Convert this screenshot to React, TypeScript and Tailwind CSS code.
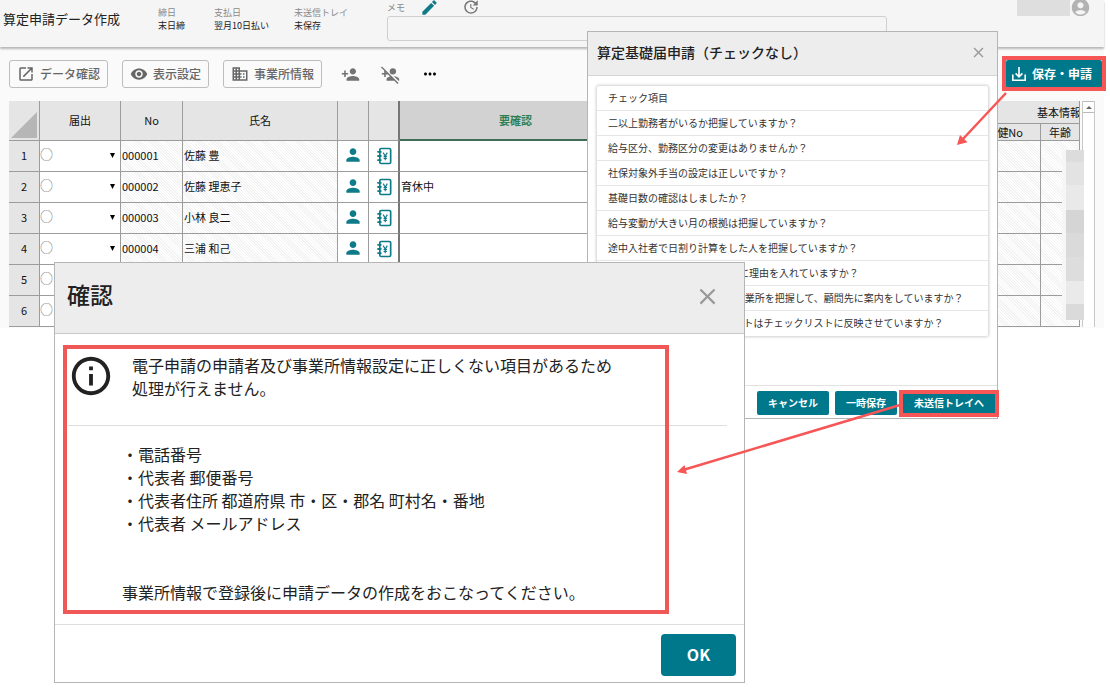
import type { ReactNode } from "react";
import {
  MdAccountCircle,
  MdBusiness,
  MdClose,
  MdEdit,
  MdMoreHoriz,
  MdOpenInNew,
  MdOutlineInfo,
  MdPerson,
  MdPersonAdd,
  MdPersonAddDisabled,
  MdUpdate,
  MdVisibility,
} from "react-icons/md";

const employees = [
  { no: "000001", name: "佐藤 豊", note: "" },
  { no: "000002", name: "佐藤 理恵子", note: "育休中" },
  { no: "000003", name: "小林 良二", note: "" },
  { no: "000004", name: "三浦 和己", note: "" },
  { no: "000005", name: "", note: "" },
  { no: "000006", name: "", note: "" },
];

const checkItems = [
  "二以上勤務者がいるか把握していますか？",
  "給与区分、勤務区分の変更はありませんか？",
  "社保対象外手当の設定は正しいですか？",
  "基礎日数の確認はしましたか？",
  "給与変動が大きい月の根拠は把握していますか？",
  "途中入社者で日割り計算をした人を把握していますか？",
  "支払基礎日数17日未満の備考に理由を入れていますか？",
  "100人以上の社会保険加入の事業所を把握して、顧問先に案内をしていますか？",
  "2か月目以降の給与変更ポイントはチェックリストに反映させていますか？",
];

const invalidFields = [
  "電話番号",
  "代表者 郵便番号",
  "代表者住所 都道府県 市・区・郡名 町村名・番地",
  "代表者 メールアドレス",
];

const headCell = "border-r border-b border-[#9c9c9c] bg-[#e5e5e5] p-0 font-normal";
const tallHeadCell = "border-r border-b border-[#9c9c9c] bg-[#e5e5e5] p-0 pb-[2px] font-normal";
const cell = "border-r border-b border-[#9c9c9c] bg-white p-0 pb-[2px]";
const hatched =
  "border-r border-b border-[#9c9c9c] bg-[repeating-linear-gradient(45deg,#ffffff_0px,#ffffff_1px,#f3f3f3_1px,#f3f3f3_2px)] p-0 pb-[2px]";

const PayrollBook = () => (
  <svg viewBox="0 0 24 24" className="h-5 w-5" fill="none" stroke="#0f7a88" strokeWidth="2">
    <rect x="7" y="3" width="13" height="18" rx="1.5" />
    <path d="M4 7h5M4 12h5M4 17h5" strokeWidth="2.2" />
    <path d="M11 8l2.500 4L16 8M13.500 12v5M11.500 12.500h4M11.500 14.800h4" strokeWidth="1.4" />
  </svg>
);

const SaveTray = () => (
  <svg viewBox="0 0 16 16" className="h-4 w-4" fill="none" stroke="currentColor" strokeWidth="1.6">
    <path d="M1.8 8.5v5.7h12.4V8.5" />
    <path d="M8 1v9.5M4.6 7.4L8 10.8l3.4-3.4" />
  </svg>
);

const Summary = ({ label, value, width }: { label: string; value: string; width: string }) => (
  <dl className={`${width} shrink-0 pt-[6px] text-[9px] leading-[13px]`}>
    <dt className="text-[#8a8a8a]">{label}</dt>
    <dd className="text-[#222]">{value}</dd>
  </dl>
);

const ToolButton = ({ icon, children }: { icon: ReactNode; children: string }) => (
  <button className="flex h-7 items-center gap-[5px] rounded-[3px] border border-[#bdbdbd] px-[7px] pb-px text-[12px] font-medium whitespace-nowrap text-[#666]">
    {icon}
    {children}
  </button>
);

const PrimaryButton = ({ children }: { children: string }) => (
  <button className="h-6 rounded-[2px] bg-[#00788c] px-[11px] pb-px text-[10px] font-bold text-white">
    {children}
  </button>
);

const Header = () => (
  <header className="relative flex h-[47px] bg-[#f5f5f5] shadow-[0_2px_2px_#b8b8b8]">
    <h1 className="w-[158px] shrink-0 pt-[9px] pl-[3px] text-[13px] leading-5 text-[#222]">
      算定申請データ作成
    </h1>
    <Summary label="締日" value="末日締" width="w-[56px]" />
    <Summary label="支払日" value="翌月10日払い" width="w-[80px]" />
    <Summary label="未送信トレイ" value="未保存" width="w-[93px]" />
    <div className="max-w-[500px] flex-1">
      <div className="flex h-4 items-center text-[9px] text-[#8a8a8a]">
        <label htmlFor="memo" className="w-[33px]">
          メモ
        </label>
        <button aria-label="メモを編集" className="mb-[2px] w-[42px] text-[#0f7a88]">
          <MdEdit size={19} />
        </button>
        <button aria-label="更新履歴" className="mb-[2px] text-[#777]">
          <MdUpdate size={18} />
        </button>
      </div>
      <input
        id="memo"
        readOnly
        className="block h-[25px] w-full rounded-[3px] border border-[#cfcfcf] bg-transparent px-2 text-[11px]"
      />
    </div>
    <div className="ml-auto flex h-4 items-center overflow-hidden pr-[13px]">
      <span className="h-4 w-[53px] bg-[#dedede]" />
      <MdAccountCircle size={21} className="mb-[2px] shrink-0 text-[#b3b3b3]" />
    </div>
  </header>
);

const Toolbar = () => (
  <div className="flex h-[54px] items-center pr-[2px] pl-[9px]">
    <div className="flex gap-[14px]">
      <ToolButton icon={<MdOpenInNew size={18} />}>データ確認</ToolButton>
      <ToolButton icon={<MdVisibility size={18} />}>表示設定</ToolButton>
      <ToolButton icon={<MdBusiness size={18} />}>事業所情報</ToolButton>
    </div>
    <div className="ml-2 flex text-[#737373]">
      <button aria-label="従業員を追加" className="flex w-10 justify-center">
        <MdPersonAdd size={19} />
      </button>
      <button aria-label="従業員を除外" className="flex w-10 justify-center">
        <MdPersonAddDisabled size={19} />
      </button>
      <button aria-label="その他" className="flex w-10 justify-center text-black">
        <MdMoreHoriz size={18} />
      </button>
    </div>
    <button className="ml-auto flex h-7 items-center gap-[5px] rounded-[2px] bg-[#00788c] pr-[10px] pb-px pl-[5px] text-[12px] font-bold text-white">
      <SaveTray />
      保存・申請
    </button>
  </div>
);

const EmployeeTable = () => (
  <table className="w-full table-fixed border-separate border-spacing-0 text-[11px] leading-4 text-[#111]">
    <colgroup>
      <col className="w-[31px]" />
      <col className="w-[81px]" />
      <col className="w-[62px]" />
      <col className="w-[155px]" />
      <col className="w-[31px]" />
      <col className="w-[31px]" />
      <col className="w-[232px]" />
      <col />
      <col className="w-[80px]" />
      <col className="w-[39px]" />
    </colgroup>
    <thead>
      <tr className="h-[23px]">
        <th rowSpan={2} className={headCell} aria-label="すべて選択">
          <svg viewBox="0 0 30 39" className="block h-[39px] w-[30px]">
            <path d="M28 11v26H2z" fill="#b6b6b6" />
          </svg>
        </th>
        <th rowSpan={2} className={tallHeadCell}>届出</th>
        <th rowSpan={2} className={tallHeadCell}>No</th>
        <th rowSpan={2} className={tallHeadCell}>氏名</th>
        <th rowSpan={2} className={tallHeadCell} aria-label="従業員" />
        <th
          rowSpan={2}
          aria-label="賃金台帳"
          className="border-r-2 border-b border-r-[#777] border-b-[#9c9c9c] bg-[#e5e5e5] p-0"
        />
        <th
          rowSpan={2}
          className="border-r border-b-2 border-r-[#9c9c9c] border-b-[#3f6b57] bg-[#d2d2d2] p-0 font-bold text-[#2f7f53]"
        >
          要確認
        </th>
        <th rowSpan={2} className={headCell} />
        <th colSpan={2} className={headCell}>
          <div className="overflow-hidden pl-[76px] text-left whitespace-nowrap">基本情報</div>
        </th>
      </tr>
      <tr className="h-[17px]">
        <th className={headCell}>
          <div className="pr-[17px] text-right">健No</div>
        </th>
        <th className={headCell}>年齢</th>
      </tr>
    </thead>
    <tbody>
      {employees.map((e, i) => (
        <tr key={e.no} className="h-[31px]">
          <th className={tallHeadCell}>{i + 1}</th>
          <td className={cell}>
            <div className="relative">
              <select
                aria-label={`${e.no} 届出`}
                className="block h-5 w-full appearance-none bg-transparent pb-[2px] text-[13px] leading-[18px] text-[#777]"
              >
                <option>○</option>
              </select>
              <svg
                viewBox="0 0 6 6"
                className="pointer-events-none absolute top-[8px] right-[5px] h-[5px] w-[5px]"
              >
                <path d="M0 0h6L3 6z" />
              </svg>
            </div>
          </td>
          <td className={`${hatched} pl-px`}>{e.no}</td>
          <td className={`${hatched} pl-px`}>{e.name}</td>
          <td className={cell}>
            <button aria-label="従業員情報" className="mx-auto block text-[#0f7a88]">
              <MdPerson size={20} />
            </button>
          </td>
          <td className="border-r-2 border-b border-r-[#777] border-b-[#9c9c9c] bg-white p-0 pb-px">
            <button aria-label="賃金台帳" className="mx-auto block">
              <PayrollBook />
            </button>
          </td>
          <td className={`${cell} pl-px`}>{e.note}</td>
          <td className={cell} />
          <td className={hatched} />
          <td className={hatched} />
        </tr>
      ))}
    </tbody>
  </table>
);

// Blurred-out personal values on the right edge of the table
const MaskedValues = () => (
  <div className="absolute top-[49px] right-[20px] w-[22px] border-l-4 border-[#f6f6f6]">
    <div className="h-3 bg-[#dcdcdc]" />
    <div className="h-[23px] bg-[#e3e3e3]" />
    <div className="h-[25px] bg-[#e9e9e9]" />
    <div className="h-[23px] bg-[#d5d5d5]" />
    <div className="h-6 bg-[#dadada]" />
    <div className="h-6 bg-[#dddddd]" />
    <div className="h-[23px] bg-[#eaeaea]" />
    <div className="h-4 bg-[#dadada]" />
  </div>
);

const CheckDialog = () => (
  <section
    role="dialog"
    aria-labelledby="check-title"
    className="absolute top-[31px] left-[587px] w-[411px] border border-[#b5b5b5] bg-white"
  >
    <div className="flex h-11 items-center justify-between border-b border-[#d5d5d5] bg-[#ededed] pr-[10px] pb-[2px] pl-[9px]">
      <h2 id="check-title" className="text-[14px] font-medium text-[#222]">
        算定基礎届申請（チェックなし）
      </h2>
      <button aria-label="閉じる" className="text-[#999]">
        <MdClose size={17} />
      </button>
    </div>
    <div className="px-[9px] pt-[10px] pb-[49px]">
      <ul className="rounded-[2px] text-[10px] leading-6 text-[#333] shadow-[0_0_3px_1px_#d0d0d0]">
        <li className="border-b border-[#e6e6e6] pl-[11px]">チェック項目</li>
        {checkItems.map((item) => (
          <li
            key={item}
            className="border-b border-[#e6e6e6] pl-[11px] whitespace-nowrap last:border-transparent"
          >
            {item}
          </li>
        ))}
      </ul>
    </div>
    <div className="flex justify-end gap-[6px] border-t border-[#e2e2e2] px-[2px] pt-[5px] pb-[3px]">
      <PrimaryButton>キャンセル</PrimaryButton>
      <PrimaryButton>一時保存</PrimaryButton>
      <PrimaryButton>未送信トレイへ</PrimaryButton>
    </div>
  </section>
);

const ConfirmDialog = () => (
  <section
    role="alertdialog"
    aria-labelledby="confirm-title"
    className="absolute top-[262px] left-[54px] w-[691px] border border-[#b5b5b5] bg-white text-[#222]"
  >
    <div className="flex h-[71px] items-start justify-between border-b border-[#c9c9c9] bg-[#ededed] pt-[15px] pr-[23px] pl-3">
      <h2 id="confirm-title" className="text-[23px] leading-[32px] font-medium">
        確認
      </h2>
      <button aria-label="閉じる" className="flex h-9 items-center text-[#999]">
        <MdClose size={27} />
      </button>
    </div>
    <div className="pr-[17px] pl-3 text-[16px] leading-[23px]">
      <div className="ml-px flex gap-[18px] border-b border-[#dedede] pt-[19px] pb-[13px]">
        <MdOutlineInfo size={46} className="shrink-0" />
        <p className="pt-px pb-3">
          電子申請の申請者及び事業所情報設定に正しくない項目があるため
          <br />
          処理が行えません。
        </p>
      </div>
      <div className="pt-[17px] pb-5 pl-[55px]">
        <ul>
          {invalidFields.map((field) => (
            <li key={field}>・{field}</li>
          ))}
        </ul>
        <p className="pt-[46px]">事業所情報で登録後に申請データの作成をおこなってください。</p>
      </div>
    </div>
    <div className="flex justify-end border-t border-[#dedede] pt-[9px] pr-2 pb-[6px]">
      <button className="h-[42px] w-[75px] rounded bg-[#00788c] pb-[3px] text-[16px] font-bold text-white">
        OK
      </button>
    </div>
  </section>
);

const Callouts = () => (
  <div className="pointer-events-none absolute top-0 left-0">
    <div className="absolute top-[56px] left-[1002px] h-[35px] w-[104px] border-4 border-[#f65656]" />
    <div className="absolute top-[390px] left-[899px] h-[27px] w-[100px] border-4 border-[#f65656]" />
    <div className="absolute top-[345px] left-[63px] h-[269px] w-[606px] border-4 border-[#f05858]" />
    <svg width="1110" height="700" className="max-w-none" stroke="#f65656" strokeWidth="2.5" fill="#f65656">
      <path d="M1006 93L962 140" />
      <path d="M957 145L960 135L967.500 142.200z" stroke="none" />
      <path d="M900 405L683 470" />
      <path d="M677 472L684.500 465L687 474z" stroke="none" />
    </svg>
  </div>
);

export default function App() {
  return (
    <div className="relative min-h-screen overflow-hidden bg-white font-['Noto_Sans_CJK_JP','Liberation_Sans',sans-serif]">
      <main className="mr-[6px] bg-[#fafafa] pb-px">
        <Header />
        <Toolbar />
        <div className="relative flex gap-[2px] pr-[9px] pl-[9px]">
          <div className="min-w-0 flex-1">
            <EmployeeTable />
          </div>
          <div className="w-[13px] border-x border-[#c8c8c8] bg-white">
            <button
              aria-label="上へスクロール"
              className="flex h-3 w-full items-center justify-center border-y border-[#bbb]"
            >
              <svg viewBox="0 0 6 3" className="h-[3px] w-[6px]">
                <path d="M0 3h6L3 0z" fill="#666" />
              </svg>
            </button>
          </div>
          <MaskedValues />
        </div>
      </main>
      <CheckDialog />
      <ConfirmDialog />
      <Callouts />
    </div>
  );
}
